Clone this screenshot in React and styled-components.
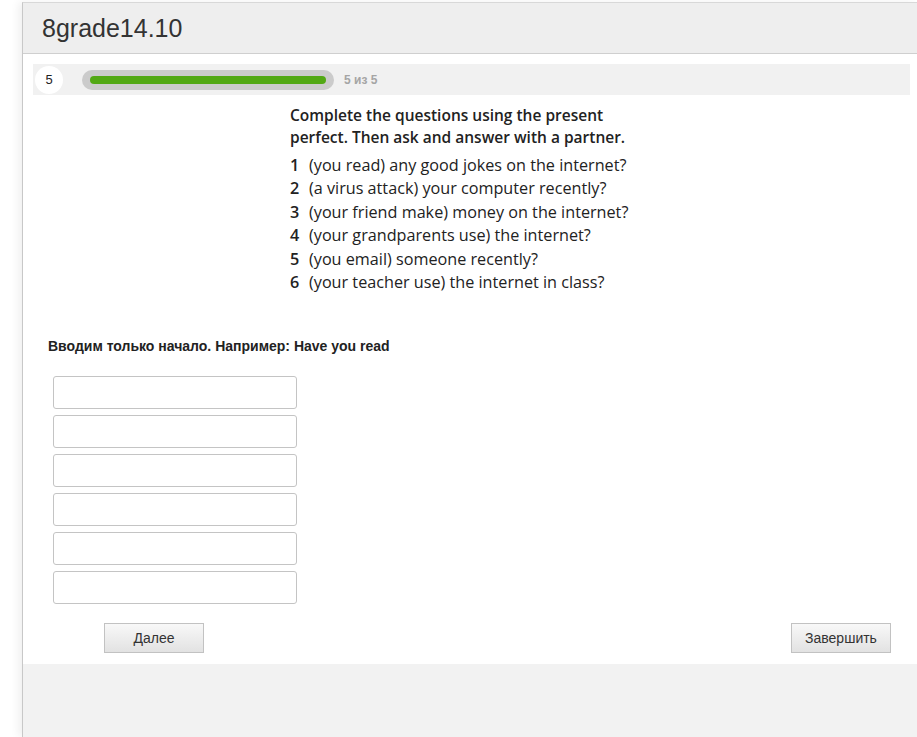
import React from "react";
import styled, { createGlobalStyle } from "styled-components";

const Global = createGlobalStyle`
  html, body {
    margin: 0;
    padding: 0;
    background: #fff;
    font-family: "Liberation Sans", Arial, sans-serif;
  }
`;

const Panel = styled.div`
  margin: 2px 0 0 22px;
  min-height: calc(100vh - 2px);
  background: #f2f2f2;
  border-left: 1px solid #c8c8c8;
  border-top: 1px solid #d8d8d8;
  box-shadow: -4px 0 8px rgba(0, 0, 0, 0.06);
  box-sizing: border-box;
  overflow: hidden;
`;

const Header = styled.div`
  height: 50px;
  background: #eeeeee;
  border-bottom: 1px solid #cfcfcf;
  display: flex;
  align-items: center;
  padding-left: 19px;
  font-size: 25px;
  color: #333;
`;

const Content = styled.div`
  background: #fff;
  padding: 10px 7px 11px 10px;
`;

const ProgressRow = styled.div`
  display: flex;
  align-items: center;
  height: 31px;
  background: #f1f1f1;
  padding-left: 2px;
`;

const Step = styled.div`
  width: 28px;
  height: 28px;
  border-radius: 50%;
  background: #fff;
  display: flex;
  align-items: center;
  justify-content: center;
  font-size: 13px;
  color: #222;
`;

const Track = styled.div`
  margin-left: 19px;
  width: 252px;
  height: 20px;
  border-radius: 10px;
  background: #cbcbcb;
  display: flex;
  align-items: center;
  padding: 0 8px;
  box-sizing: border-box;
`;

const Fill = styled.div`
  height: 8px;
  border-radius: 4px;
  background: #52a814;
`;

const ProgressLabel = styled.span`
  margin-left: 10px;
  font-size: 12px;
  font-weight: bold;
  color: #a5a5a5;
`;

const Task = styled.div`
  margin: 9px 0 0 257px;
  font-family: "Open Sans", sans-serif;
  color: #222;
`;

const TaskTitle = styled.div`
  font-size: 15.5px;
  font-weight: 600;
  line-height: 22px;
  width: 350px;
  margin-bottom: 6px;
`;

const Item = styled.div`
  display: flex;
  font-size: 16.2px;
  line-height: 23.4px;
`;

const Num = styled.span`
  font-weight: 600;
  width: 19px;
`;

const Hint = styled.div`
  margin: 44px 0 0 15px;
  font-size: 14px;
  font-weight: bold;
  color: #222;
`;

const Fields = styled.div`
  display: flex;
  flex-direction: column;
  gap: 6px;
  margin: 22px 0 0 20px;
`;

const Field = styled.input`
  width: 244px;
  height: 33px;
  box-sizing: border-box;
  border: 1px solid #c4c4c4;
  border-radius: 3px;
  background: #fff;
`;

const Footer = styled.div`
  display: flex;
  justify-content: space-between;
  margin-top: 19px;
  padding: 0 19px 0 71px;
`;

const Button = styled.button`
  width: 100px;
  height: 30px;
  border: 1px solid #c2c2c2;
  background: linear-gradient(#f8f8f8, #e2e2e2);
  font-family: "Liberation Sans", Arial, sans-serif;
  font-size: 14px;
  color: #333;
  cursor: pointer;
`;

const items = [
  "(you read) any good jokes on the internet?",
  "(a virus attack) your computer recently?",
  "(your friend make) money on the internet?",
  "(your grandparents use) the internet?",
  "(you email) someone recently?",
  "(your teacher use) the internet in class?",
];

const App = () => {
  return (
    <>
      <Global />
      <Panel>
        <Header>8grade14.10</Header>
        <Content>
          <ProgressRow>
            <Step>5</Step>
            <Track>
              <Fill style={{ width: "100%" }} />
            </Track>
            <ProgressLabel>5 из 5</ProgressLabel>
          </ProgressRow>
          <Task>
            <TaskTitle>
              Complete the questions using the present perfect. Then ask and
              answer with a partner.
            </TaskTitle>
            {items.map((t, i) => (
              <Item key={i}>
                <Num>{i + 1}</Num>
                <span>{t}</span>
              </Item>
            ))}
          </Task>
          <Hint>Вводим только начало. Например: Have you read</Hint>
          <Fields>
            {items.map((_, i) => (
              <Field key={i} type="text" />
            ))}
          </Fields>
          <Footer>
            <Button>Далее</Button>
            <Button>Завершить</Button>
          </Footer>
        </Content>
      </Panel>
    </>
  );
};

export default App;
